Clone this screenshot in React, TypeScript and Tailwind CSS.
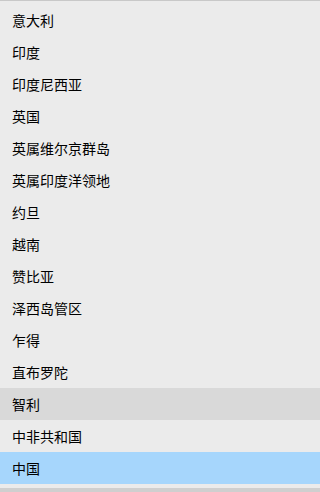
import React from "react";

const items = [
  "意大利",
  "印度",
  "印度尼西亚",
  "英国",
  "英属维尔京群岛",
  "英属印度洋领地",
  "约旦",
  "越南",
  "赞比亚",
  "泽西岛管区",
  "乍得",
  "直布罗陀",
  "智利",
  "中非共和国",
  "中国",
];

export default function App() {
  return (
    <div
      className="w-full h-[492px] bg-[#ebebeb] border-t border-[#c8c8c8] overflow-hidden flex flex-col"
      style={{ fontFamily: '"Noto Sans CJK SC", "Noto Sans", sans-serif' }}
    >
      <div className="pt-[3px] flex flex-col">
        {items.map((name) => {
          const bg =
            name === "智利"
              ? "bg-[#d9d9d9]"
              : name === "中国"
              ? "bg-[#a6d6fc]"
              : "";
          return (
            <div
              key={name}
              className={`h-[32px] flex items-center pl-[12px] pb-[1px] text-[14px] leading-none text-black ${bg}`}
            >
              {name}
            </div>
          );
        })}
      </div>
      <div className="flex-1" />
      <div className="h-[4px] bg-[#cfcfcf]" />
    </div>
  );
}
